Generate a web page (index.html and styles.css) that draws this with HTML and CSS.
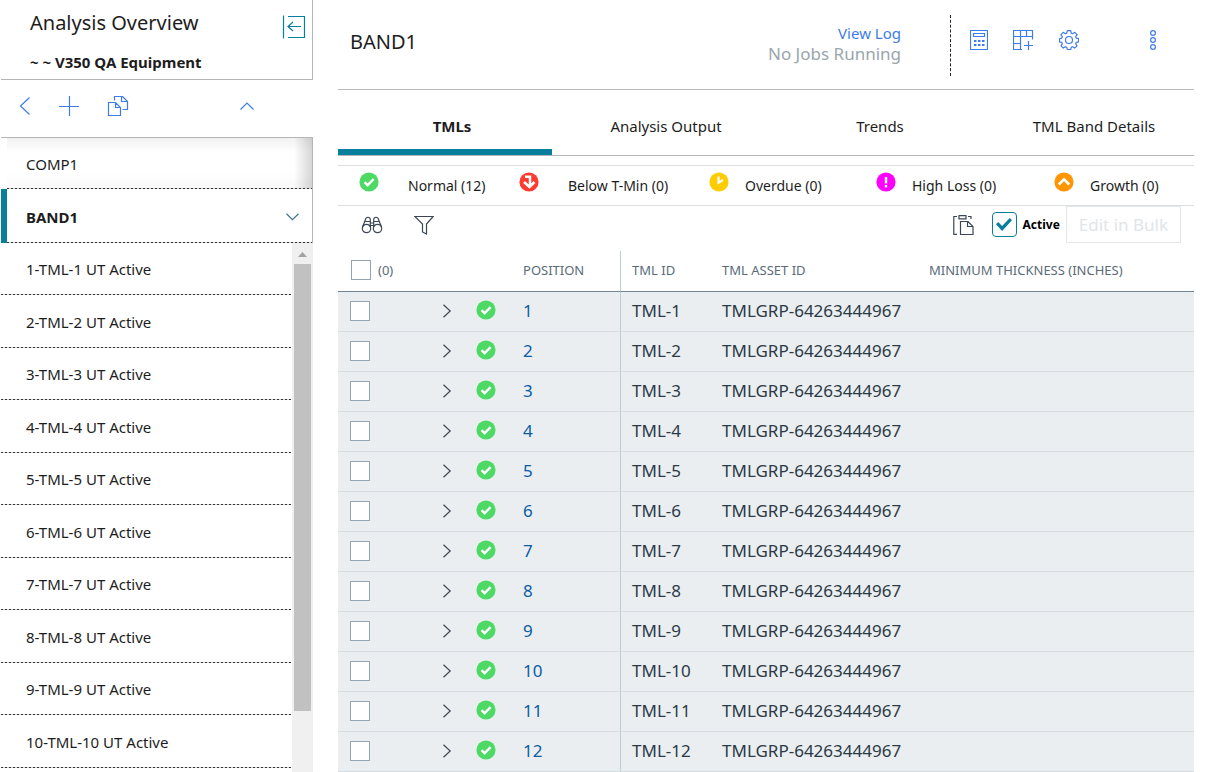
FILE: index.html
```html
<!DOCTYPE html>
<html lang="en">
<head>
<meta charset="utf-8">
<title>Analysis Overview</title>
<link rel="stylesheet" href="styles.css">
</head>
<body>
<svg class="sprite" aria-hidden="true">
  <symbol id="ok" viewBox="0 0 20 20"><circle cx="10" cy="10" r="9.6" fill="#4cd964"/><path d="M5.6 10.2l3 3 6-6" fill="none" stroke="#fff" stroke-width="2.4"/></symbol>
  <symbol id="chev" viewBox="0 0 10 14"><path d="M1.500 .8L8.200 7l-6.700 6.200" fill="none" stroke="currentColor" stroke-width="1.200"/></symbol>
</svg>
<div class="app">
  <aside class="side">
    <header class="side-head">
      <div>
        <h1 class="side-title">Analysis Overview</h1>
        <p class="side-sub">~ ~ V350 QA Equipment</p>
      </div>
      <button class="icon-btn teal" aria-label="Collapse panel"><svg width="24" height="24" viewBox="0 0 24 24"><path d="M1.500 .5v23M6 1.500h16.500v21H6M6 11.500h13M11 7l-5 4.500 5 4.500" fill="none" stroke="currentColor" stroke-width="1.200"/></svg></button>
    </header>
    <div class="side-tools">
      <button class="icon-btn" aria-label="Back"><svg width="12" height="20" viewBox="0 0 12 20"><path d="M10.500 1.500L1.500 10l9 8.500" fill="none" stroke="currentColor" stroke-width="1.200"/></svg></button>
      <button class="icon-btn" aria-label="Add"><svg width="20" height="20" viewBox="0 0 20 20"><path d="M10.500 0v20M0 10.500h20" fill="none" stroke="currentColor" stroke-width="1.200"/></svg></button>
      <button class="icon-btn" aria-label="Copy"><svg width="22" height="20" viewBox="0 0 22 20"><path d="M1.500 6.500h7l5 5v8h-12zM8.500 6.500v5h5M7.500 4.500v-4h8l5 5v8h-5M14.500 .5v5h6" fill="none" stroke="currentColor" stroke-width="1.200"/></svg></button>
      <button class="icon-btn push" aria-label="Collapse list"><svg width="14" height="8" viewBox="0 0 14 8"><path d="M.5 7.500L7 1l6.500 6.500" fill="none" stroke="currentColor" stroke-width="1.200"/></svg></button>
    </div>
    <nav class="tree">
      <a class="node comp" href="#">COMP1</a>
      <a class="node band" href="#">BAND1<svg width="13" height="8" viewBox="0 0 13 8"><path d="M.5 .8l6 5.800 6-5.800" fill="none" stroke="#3d7590" stroke-width="1.200"/></svg></a>
      <div class="leaves">
        <ul class="leaf-list">
          <li><a href="#">1-TML-1 UT Active</a></li>
          <li><a href="#">2-TML-2 UT Active</a></li>
          <li><a href="#">3-TML-3 UT Active</a></li>
          <li><a href="#">4-TML-4 UT Active</a></li>
          <li><a href="#">5-TML-5 UT Active</a></li>
          <li><a href="#">6-TML-6 UT Active</a></li>
          <li><a href="#">7-TML-7 UT Active</a></li>
          <li><a href="#">8-TML-8 UT Active</a></li>
          <li><a href="#">9-TML-9 UT Active</a></li>
          <li><a href="#">10-TML-10 UT Active</a></li>
        </ul>
        <div class="scroll" aria-hidden="true">
          <svg width="9" height="5" viewBox="0 0 9 5"><path d="M0 5l4.500-5L9 5z" fill="#a3a3a3"/></svg>
          <div class="thumb"></div>
        </div>
      </div>
    </nav>
  </aside>
  <main class="main">
    <header class="head">
      <h2 class="head-title">BAND1</h2>
      <div class="jobs"><a href="#">View Log</a><span>No Jobs Running</span></div>
      <div class="actions">
        <button class="icon-btn" aria-label="Calculate"><svg width="18" height="20" viewBox="0 0 18 20"><path d="M.5 .5h17v19H.5zM3.500 3.500h11v3h-11z" fill="none" stroke="currentColor" stroke-width="1.200"/><path d="M4 10h2.500v2H4zm4 0h2.500v2H8zm4 0h2.500v2H12zM4 14h2.500v2H4zm4 0h2.500v2H8zm4 0h2.500v2H12z" fill="currentColor"/></svg></button>
        <button class="icon-btn" aria-label="Add column"><svg width="21" height="20" viewBox="0 0 21 20"><path d="M9 19.500H.5V.5h19v9M.5 6.500h19M.5 13.500h7M7.500 .5v19M13.500 .5v6M15.500 11v9M11 15.500h9" fill="none" stroke="currentColor" stroke-width="1.200"/></svg></button>
        <button class="icon-btn" aria-label="Settings"><svg width="20" height="20" viewBox="0 0 20 20"><path d="M8.300 .7h3.400l.5 2.400 1.500.6 2.100-1.400 2.300 2.300-1.400 2.100.6 1.500 2.200.4v3.200l-2.200.5-.6 1.500 1.300 2-2.300 2.300-2-1.300-1.500.6-.5 2.200H8.300l-.5-2.200-1.500-.6-2 1.300L2 15.800l1.300-2-.6-1.500-2.200-.5V8.600l2.200-.4.6-1.500L1.900 4.600l2.300-2.300 2.100 1.400 1.500-.6z" fill="none" stroke="currentColor" stroke-width="1.200" stroke-linejoin="round"/><circle cx="10" cy="10" r="3.500" fill="none" stroke="currentColor" stroke-width="1.200"/></svg></button>
        <button class="icon-btn more" aria-label="More"><svg width="8" height="20" viewBox="0 0 8 20"><g fill="none" stroke="currentColor" stroke-width="1.200"><circle cx="4" cy="3" r="2.400"/><circle cx="4" cy="10" r="2.400"/><circle cx="4" cy="17" r="2.400"/></g></svg></button>
      </div>
    </header>
    <nav class="tabs">
      <a class="tab on" href="#">TMLs</a>
      <a class="tab" href="#">Analysis Output</a>
      <a class="tab" href="#">Trends</a>
      <a class="tab" href="#">TML Band Details</a>
    </nav>
    <div class="legend">
      <div class="key wide"><svg width="20" height="20"><use href="#ok"/></svg><span>Normal (12)</span></div>
      <div class="key wide"><svg width="20" height="20" viewBox="0 0 20 20"><circle cx="10" cy="10" r="9.600" fill="#ff3b30"/><path d="M6 4.800h5V14M5 10l5.500 5 5-5" fill="none" stroke="#fff" stroke-width="2.500"/></svg><span>Below T-Min (0)</span></div>
      <div class="key"><svg width="20" height="20" viewBox="0 0 20 20"><circle cx="10" cy="10" r="9.600" fill="#fc0"/><path d="M9.500 4.500v6.300l4.500-3" fill="none" stroke="#fff" stroke-width="2.200"/></svg><span>Overdue (0)</span></div>
      <div class="key"><svg width="20" height="20" viewBox="0 0 20 20"><circle cx="10" cy="10" r="9.600" fill="#f0f"/><path d="M10 5v6.500M10 13v2.500" stroke="#fff" stroke-width="2.400"/></svg><span>High Loss (0)</span></div>
      <div class="key"><svg width="20" height="20" viewBox="0 0 20 20"><circle cx="10" cy="10" r="9.600" fill="#ff9500"/><path d="M4.800 12.500L10 7.300l5.200 5.200" fill="none" stroke="#fff" stroke-width="2.500"/></svg><span>Growth (0)</span></div>
    </div>
    <div class="tools">
      <button class="icon-btn dark" aria-label="Find"><svg width="22" height="18" viewBox="0 0 22 18"><g fill="none" stroke="currentColor" stroke-width="1.200"><circle cx="5.500" cy="12.500" r="4.200"/><circle cx="16.500" cy="12.500" r="4.200"/><path d="M1.500 11L4.500 3.500C5 .5 9 .5 9.300 3.500V11M20.500 11l-3-7.500C17 .5 13 .5 12.700 3.500V11M4 5.500h5M13 5.500h5M9.300 7h3.400M9.300 9.500h3.400"/></g></svg></button>
      <button class="icon-btn dark" aria-label="Filter"><svg width="20" height="20" viewBox="0 0 20 20"><path d="M.8 1.500h18.400L12.500 9v10l-4-2V9z" fill="none" stroke="currentColor" stroke-width="1.200"/></svg></button>
      <div class="tools-right">
        <button class="icon-btn dark" aria-label="Paste"><svg width="21" height="20" viewBox="0 0 21 20"><path d="M4 1.500H.8v17.800H4M6 .6h7v3.200H6zM15 1.500h3V4M7.500 6.500h7.500l5 5v8H7.500zM14.500 6.500v5h5.500" fill="none" stroke="currentColor" stroke-width="1.200"/></svg></button>
        <label class="active"><input class="tick" type="checkbox" checked>Active</label>
        <button class="bulk" disabled>Edit in Bulk</button>
      </div>
    </div>
    <table class="grid">
      <colgroup><col class="c-check"><col class="c-open"><col class="c-state"><col class="c-pos"><col class="c-id"><col class="c-asset"><col></colgroup>
      <thead><tr><th colspan="3"><label class="all"><input class="box" type="checkbox">(0)</label></th><th class="pos">POSITION</th><th>TML ID</th><th>TML ASSET ID</th><th>MINIMUM THICKNESS (INCHES)</th></tr></thead>
      <tbody>
        <tr><td><input class="box" type="checkbox" aria-label="Select 1"></td><td><button class="open" aria-label="Open 1"><svg width="10" height="14"><use href="#chev"/></svg></button></td><td><svg class="state" width="20" height="20"><use href="#ok"/></svg></td><td class="pos"><a href="#">1</a></td><td>TML-1</td><td>TMLGRP-64263444967</td><td></td></tr>
        <tr><td><input class="box" type="checkbox" aria-label="Select 2"></td><td><button class="open" aria-label="Open 2"><svg width="10" height="14"><use href="#chev"/></svg></button></td><td><svg class="state" width="20" height="20"><use href="#ok"/></svg></td><td class="pos"><a href="#">2</a></td><td>TML-2</td><td>TMLGRP-64263444967</td><td></td></tr>
        <tr><td><input class="box" type="checkbox" aria-label="Select 3"></td><td><button class="open" aria-label="Open 3"><svg width="10" height="14"><use href="#chev"/></svg></button></td><td><svg class="state" width="20" height="20"><use href="#ok"/></svg></td><td class="pos"><a href="#">3</a></td><td>TML-3</td><td>TMLGRP-64263444967</td><td></td></tr>
        <tr><td><input class="box" type="checkbox" aria-label="Select 4"></td><td><button class="open" aria-label="Open 4"><svg width="10" height="14"><use href="#chev"/></svg></button></td><td><svg class="state" width="20" height="20"><use href="#ok"/></svg></td><td class="pos"><a href="#">4</a></td><td>TML-4</td><td>TMLGRP-64263444967</td><td></td></tr>
        <tr><td><input class="box" type="checkbox" aria-label="Select 5"></td><td><button class="open" aria-label="Open 5"><svg width="10" height="14"><use href="#chev"/></svg></button></td><td><svg class="state" width="20" height="20"><use href="#ok"/></svg></td><td class="pos"><a href="#">5</a></td><td>TML-5</td><td>TMLGRP-64263444967</td><td></td></tr>
        <tr><td><input class="box" type="checkbox" aria-label="Select 6"></td><td><button class="open" aria-label="Open 6"><svg width="10" height="14"><use href="#chev"/></svg></button></td><td><svg class="state" width="20" height="20"><use href="#ok"/></svg></td><td class="pos"><a href="#">6</a></td><td>TML-6</td><td>TMLGRP-64263444967</td><td></td></tr>
        <tr><td><input class="box" type="checkbox" aria-label="Select 7"></td><td><button class="open" aria-label="Open 7"><svg width="10" height="14"><use href="#chev"/></svg></button></td><td><svg class="state" width="20" height="20"><use href="#ok"/></svg></td><td class="pos"><a href="#">7</a></td><td>TML-7</td><td>TMLGRP-64263444967</td><td></td></tr>
        <tr><td><input class="box" type="checkbox" aria-label="Select 8"></td><td><button class="open" aria-label="Open 8"><svg width="10" height="14"><use href="#chev"/></svg></button></td><td><svg class="state" width="20" height="20"><use href="#ok"/></svg></td><td class="pos"><a href="#">8</a></td><td>TML-8</td><td>TMLGRP-64263444967</td><td></td></tr>
        <tr><td><input class="box" type="checkbox" aria-label="Select 9"></td><td><button class="open" aria-label="Open 9"><svg width="10" height="14"><use href="#chev"/></svg></button></td><td><svg class="state" width="20" height="20"><use href="#ok"/></svg></td><td class="pos"><a href="#">9</a></td><td>TML-9</td><td>TMLGRP-64263444967</td><td></td></tr>
        <tr><td><input class="box" type="checkbox" aria-label="Select 10"></td><td><button class="open" aria-label="Open 10"><svg width="10" height="14"><use href="#chev"/></svg></button></td><td><svg class="state" width="20" height="20"><use href="#ok"/></svg></td><td class="pos"><a href="#">10</a></td><td>TML-10</td><td>TMLGRP-64263444967</td><td></td></tr>
        <tr><td><input class="box" type="checkbox" aria-label="Select 11"></td><td><button class="open" aria-label="Open 11"><svg width="10" height="14"><use href="#chev"/></svg></button></td><td><svg class="state" width="20" height="20"><use href="#ok"/></svg></td><td class="pos"><a href="#">11</a></td><td>TML-11</td><td>TMLGRP-64263444967</td><td></td></tr>
        <tr><td><input class="box" type="checkbox" aria-label="Select 12"></td><td><button class="open" aria-label="Open 12"><svg width="10" height="14"><use href="#chev"/></svg></button></td><td><svg class="state" width="20" height="20"><use href="#ok"/></svg></td><td class="pos"><a href="#">12</a></td><td>TML-12</td><td>TMLGRP-64263444967</td><td></td></tr>
      </tbody>
    </table>
  </main>
</div>
</body>
</html>
```
FILE: styles.css
```css
:root { --dots: repeating-linear-gradient(to right, #333 0 2px, #d4d4d4 2px 4px); }
* { box-sizing: border-box; }
body { margin: 0; background: #fff; color: #1d1d1d; font: 15px/20px "Noto Sans", sans-serif; }
a { color: inherit; text-decoration: none; }
h1, h2, p, ul { margin: 0; padding: 0; font-weight: 400; }
svg { display: block; flex: none; }
button, input { font: inherit; margin: 0; }
.sprite { position: absolute; width: 0; height: 0; }
.icon-btn { display: flex; padding: 0; border: 0; background: none; color: #3e7de8; }
.teal { color: #087f9c; }
.dark { color: #3b4756; }

.app { display: flex; min-height: 100vh; }
.side { display: flex; flex-direction: column; flex: none; width: 313px; padding-left: 1px; }
.side-head { display: flex; justify-content: space-between; align-items: flex-start; height: 80px; padding: 9px 6px 0 29px; border: solid #b4b4b9; border-width: 0 1px 1px 0; }
.side-title { font-size: 20px; line-height: 28px; }
.side-sub { margin-top: 15px; font-weight: 700; }
.side-head .icon-btn { margin-top: 6px; }
.side-tools { display: flex; align-items: center; gap: 28px; height: 58px; padding: 0 59px 6px 18px; border-bottom: 1px solid #b4b4b9; }
.push { margin-left: auto; }
.tree { display: flex; flex-direction: column; flex: 1; }
.node { display: flex; align-items: center; justify-content: space-between; padding: 0 13px 0 19px; border-left: 6px solid transparent; border-right: 1px solid #b4b4b9; background: var(--dots) bottom / 100% 1px no-repeat; }
.comp { height: 51px; background: var(--dots) bottom / 100% 1px no-repeat, linear-gradient(to left, rgba(0, 0, 0, .16), transparent 18px) no-repeat padding-box, linear-gradient(#f1f1f1, #fff 14px, #fff 36px, #f8f8f8) padding-box; }
.band { height: 54px; padding-top: 2px; font-weight: 700; border-left-color: #087f9c; }
.leaves { display: flex; flex: 1; }
.leaf-list { flex: 1; list-style: none; }
.leaf-list li { display: flex; align-items: center; height: 52px; padding-left: 25px; background: var(--dots) bottom / 100% 1px no-repeat; }
.leaf-list li:nth-child(even) { height: 53px; }
.scroll { display: flex; flex-direction: column; align-items: center; gap: 7px; width: 21px; padding-top: 9px; margin-left: 1px; background: #f0f0f0; }
.thumb { width: 17px; height: 86%; background: #c1c1c1; }

.main { flex: 1; min-width: 0; padding: 0 24px 0 25px; }
.head { display: flex; height: 90px; padding: 15px 37px 13px 12px; border-bottom: 1px solid #b9b9bd; }
.head-title { flex: 1; padding-top: 13px; font-size: 20px; line-height: 28px; }
.jobs { display: flex; flex-direction: column; align-items: flex-end; padding-top: 8px; padding-right: 49px; }
.jobs a { color: #3e7de8; }
.jobs span { color: #9aa5ad; font-size: 17px; line-height: 22px; }
.actions { display: flex; align-items: flex-start; gap: 25px; padding: 15px 0 0 19px; border-left: 1px dashed #222; }
.more { margin-left: 45px; }
.tabs { display: flex; height: 66px; border-bottom: 1px solid #b4b4b9; }
.tab { flex: 1 1 0; display: flex; align-items: center; justify-content: center; padding: 12px 0 0 14px; border-bottom: 6px solid transparent; }
.on { font-weight: 700; border-bottom-color: #087f9c; }
.legend { display: grid; grid-template-columns: 160fr 190fr 167fr 178fr 140fr; height: 41px; margin-top: 9px; padding: 6px 0 0 21px; border: solid #dcdfe2; border-width: 1px 0; font-size: 14px; }
.key { display: flex; gap: 16px; white-space: nowrap; }
.key.wide { gap: 29px; }
.key span { padding-top: 4px; }
.tools { display: flex; align-items: center; gap: 31px; height: 37px; padding: 0 13px 0 23px; }
.tools-right { display: flex; align-items: center; margin-left: auto; }
.active { display: flex; align-items: center; gap: 6px; margin: 0 6px 0 18px; color: #000; font-size: 12px; font-weight: 700; }
.tick { appearance: none; width: 25px; height: 25px; border: 1px solid #087f9c; border-radius: 4px; display: grid; place-items: center; }
.tick:checked::before { content: ""; width: 16px; height: 13px; background: #087f9c; clip-path: polygon(0 48%, 14% 31%, 38% 61%, 86% 0, 100% 17%, 38% 100%); }
.bulk { height: 37px; padding: 0 12px; border: 1px solid #e4e7e9; background: #fff; color: #e1e5e8; font-size: 17px; }

.grid { width: 100%; margin-top: 8px; table-layout: fixed; border-collapse: separate; border-spacing: 0; }
.c-check { width: 92px; }
.c-open { width: 36px; }
.c-state { width: 46px; }
.c-pos { width: 109px; }
.c-id { width: 90px; }
.c-asset { width: 207px; }
.grid th { height: 41px; padding: 0 11px 2px; border-bottom: 1px solid #6f8595; color: #5a6b79; font-size: 13px; font-weight: 400; text-align: left; white-space: nowrap; }
.grid td { height: 40px; padding: 0 11px 2px; border-bottom: 1px solid #d7dee3; background: #eaeef1; color: #2b3a46; font-size: 17px; }
.grid .pos { border-right: 1px solid #c0ccd5; }
.grid td.pos { color: #0b5da4; }
.all { display: flex; align-items: center; gap: 7px; padding-left: 2px; }
.box { appearance: none; display: block; width: 20px; height: 20px; margin-left: 1px; border: 1px solid #94a5b1; background: #fff; }
.all .box { margin: 0; }
.open { display: block; padding: 0; margin-left: 1px; border: 0; background: none; color: #3b4756; }
.state { margin: -2px 0 0 -1px; }
```
